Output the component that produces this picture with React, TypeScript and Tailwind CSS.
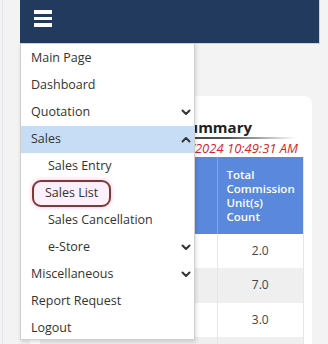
import React from 'react';

const font = { fontFamily: '"Open Sans", "Noto Sans", Arial, sans-serif' };

function Chevron({ up }: { up?: boolean }) {
  return <svg width="10" height="7" viewBox="0 0 10 7" className="text-[#333]">
    <path d={up ? 'M1.5 5.5 L5 2 L8.5 5.5' : 'M1.5 1.5 L5 5 L8.5 1.5'} fill="none" stroke="currentColor" strokeWidth="2" strokeLinecap="round" strokeLinejoin="round" />
  </svg>;
}

function Item({ label, sub, chevron, active }: { label: string; sub?: boolean; chevron?: 'up' | 'down'; active?: boolean }) {
  return <div className={`flex h-[27px] items-center justify-between pr-[3px] ${sub ? 'pl-[27px]' : 'pl-[10px]'} ${active ? 'bg-[#c7ddf6]' : ''}`}>
    <span>{label}</span>
    {chevron && <Chevron up={chevron === 'up'} />}
  </div>;
}

export default function App() {
  const rows = [
    { name: 'Cellular Store', v: '2.0' },
    { name: 'Cellular Store', v: '7.0' },
    { name: 'Cellular Store', v: '3.0' },
    { name: 'Cellular Store', v: '4.0' },
  ];
  return <div className="relative h-[344px] w-[328px] overflow-hidden bg-[#f3f3f3]" style={font}>
    <div className="absolute left-[2px] top-0 h-full w-px bg-[#e2e4e7]" />
    <div className="ml-[20px] flex h-[44px] w-[300px] items-start border-b border-r border-[#c9d2de] bg-[#233a5f] pl-[14px] pt-[10px]">
      <div className="flex w-[18px] flex-col gap-[3px]">
        <div className="h-[3.5px] bg-white" />
        <div className="h-[3.5px] bg-white" />
        <div className="h-[3.5px] bg-white" />
      </div>
    </div>

    <div className="ml-[30px] mt-[52px] w-[282px] rounded-t-[8px] bg-white pt-[21px]">
      <div className="flex justify-end pr-[60px] text-[15px] font-bold leading-[20px] text-[#222]">Sales Summary</div>
      <div className="ml-[130px] h-[1.5px] w-[136px] bg-gradient-to-r from-[#333] via-[#555] to-transparent" />
      <div className="flex justify-end pr-[14px] text-[13px] italic leading-[18px] text-[#d3262b]">As of 10/05/2024 10:49:31 AM</div>
      <table className="ml-[10px] w-[264px] border-collapse text-[12px]">
        <thead>
          <tr className="bg-[#5a88dc] text-left align-top font-semibold text-white">
            <th className="h-[77px] w-[177px] border-r border-[#7fa4e6] px-[8px] pt-[8px] text-[11.5px] leading-[14px]">Store</th>
            <th className="border-r border-[#e6e6e6] pl-[9px] pr-[4px] pt-[11px] text-[11.5px] font-semibold leading-[14px]">
              <div className="w-[66px]">Total Commission Unit(s) Count</div>
            </th>
          </tr>
        </thead>
        <tbody>
          {rows.map((r, i) => <tr key={i} className={i % 2 ? 'bg-[#efefef]' : 'bg-white'}>
            <td className="h-[34.5px] border-r border-[#e6e6e6] pl-[12px] text-[#333]">{r.name}</td>
            <td className="border-r border-[#e6e6e6] text-center text-[#444]">{r.v}</td>
          </tr>)}
        </tbody>
      </table>
    </div>

    <div className="absolute left-[20px] top-[43px] h-[297px] w-[175px] border border-[#cfcfcf] bg-white pt-px text-[12.5px] text-[#333] shadow-[1px_2px_4px_rgba(0,0,0,0.15)]">
      <Item label="Main Page" />
      <Item label="Dashboard" />
      <Item label="Quotation" chevron="down" />
      <Item label="Sales" chevron="up" active />
      <Item label="Sales Entry" sub />
      <div className="flex h-[27px] items-center pl-[11px]">
        <span className="flex h-[27px] items-center rounded-[9px] border-[2.5px] border-[#7e3a32] bg-[#fdeffb] px-[11px] shadow-[0_0_3px_2px_#fbe3f6]">Sales List</span>
      </div>
      <Item label="Sales Cancellation" sub />
      <Item label="e-Store" sub chevron="down" />
      <Item label="Miscellaneous" chevron="down" />
      <Item label="Report Request" />
      <Item label="Logout" />
    </div>
  </div>;
}
